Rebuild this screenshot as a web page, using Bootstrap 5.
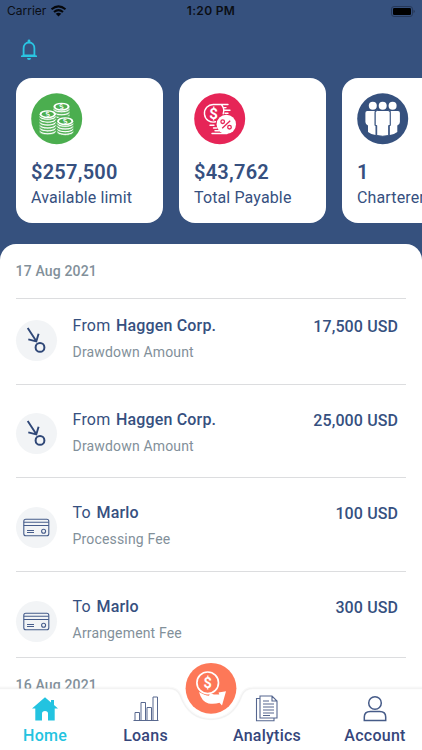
<!DOCTYPE html>
<html lang="en">
<head>
<meta charset="utf-8">
<meta name="viewport" content="width=device-width, initial-scale=1">
<title>Home</title>
<link href="https://cdn.jsdelivr.net/npm/bootstrap@5.3.0/dist/css/bootstrap.min.css" rel="stylesheet">
<style>
body{font-family:Roboto,"Liberation Sans",sans-serif;color:#36507f;background:#fff}
svg{display:block;flex:none}
.screen{width:422px;height:750px;background:#fff}
.hero{height:243.5px;background:#36517e}
.status{height:22px;font:400 12px/22px Inter,sans-serif;color:#0b0e14;padding:0 7px}
.clock{font-weight:600;letter-spacing:.35px;left:0;right:0;top:0}
.bell{margin:17px 0 0 20px}
.tiles{gap:15.5px;padding:0 0 0 15.5px;margin-top:17px}
.tile{width:147.5px;height:144.5px;border-radius:16px;flex:none;background:#fff;padding:15px 0 0 15.5px}
.figure-amt{font-size:20px;font-weight:600;line-height:24px;letter-spacing:.25px;margin-top:15px}
.figure-cap{font-size:16px;line-height:20px;letter-spacing:.13px;margin-top:4px;white-space:nowrap}
.under{background:#36517e}
.sheet{height:506.5px;border-radius:16px 16px 0 0;background:#fff;padding:0 15.6px}
.day{font-size:14px;font-weight:500;color:#82909a;letter-spacing:.15px;line-height:18px}
.day-first{height:54px;padding-top:18.5px}
.entry{height:93.7px;border-top:1.4px solid #dcdddf;padding:23px 8.3px 0 0}
.entry-first{height:86.3px;padding-top:15.5px}
.entry-last{height:86px}
.disc{width:41px;height:41px;border-radius:50%;background:#f2f4f6;margin-top:5.6px}
.who{font-size:16px;line-height:24px;letter-spacing:.17px;margin-left:16px}
.who b{font-weight:500;margin-left:1.5px}
.note{font-size:14px;line-height:20px;letter-spacing:.16px;color:#82909a;margin-top:4px}
.sum{font-size:16px;font-weight:500;line-height:24px;letter-spacing:.12px;margin-top:1px}
.day-next{border-top:1.4px solid #dcdddf;padding-top:18px}
.dock{height:82px;left:0;right:0;bottom:0}
.dock-bg{left:0;top:0}
.tabs{height:82px;padding-top:27px}
.tab{font-size:16px;font-weight:500;line-height:20px;letter-spacing:.25px;text-align:center;color:#36467b}
.tab svg{margin:0 auto 4px}
.tab.on{color:#23c3e0}
.fab{left:185px;top:-6px}
</style>
<script src="https://cdn.jsdelivr.net/npm/bootstrap@5.3.0/dist/js/bootstrap.bundle.min.js"></script>
</head>
<body>
<svg width="0" height="0" class="position-absolute">
<defs>
<g id="stack-top"><ellipse cx="0" cy="0" rx="8.1" ry="4" fill="#fff"/><ellipse cx="0" cy="0" rx="6" ry="2.6" fill="#4bae4f"/><text x="0" y="2.5" font-size="7" font-weight="700" fill="#fff" text-anchor="middle" transform="rotate(-18)">$</text></g>
<path id="layer" d="M-8.4 0c0 5 16.800 5 16.800 0v2.200c0 4.800-16.800 4.800-16.800 0z" fill="#fff"/>
<g id="draw" fill="none" stroke="#2f4777"><path d="M11.700 8 20.200 21M12.300 19.400 20.300 21.300 22.600 13.700" stroke-width="1.900"/><circle cx="24" cy="27.400" r="4.400" stroke-width="2"/></g>
<g id="fee" fill="none" stroke="#465c8b" stroke-width="1.1"><rect x="7.8" y="12.200" width="25" height="16.600" rx="2"/><path d="M7.800 15.200h25M7.800 18.500h25M11 23.500h7M11 25.500h7"/><circle cx="27.600" cy="24.200" r="2"/></g>
</defs>
</svg>
<main class="screen position-relative overflow-hidden">
<header class="hero overflow-hidden">
<div class="status d-flex align-items-center justify-content-between position-relative">
<div class="d-flex align-items-center gap-1"><span>Carrier</span>
<svg width="17" height="12" viewBox="0 0 17 12"><g fill="none" stroke="#05070b" stroke-width="2.1"><path d="M1.500 4.200q7-5.600 14 0M4 7q4.500-3.600 9 0"/></g><path d="M5.700 8.700q2.800-2 5.600 0L8.500 11.600z" fill="#05070b"/></svg></div>
<div class="clock position-absolute text-center">1:20 PM</div>
<svg width="25" height="11" viewBox="0 0 25 11"><rect x="1.500" y=".5" width="21" height="10" rx="2.6" fill="none" stroke="#263859"/><rect x="3" y="2" width="18" height="7" rx="1.2" fill="#000"/><path d="M23.700 3.800q1.800 1.700 0 3.400z" fill="#1e2c46"/></svg>
</div>
<svg class="bell" width="18" height="22" viewBox="0 0 18 22"><path d="M3.600 17V9.500C3.600 6 5.800 3.500 9 3.500s5.400 2.500 5.400 6V17" fill="none" stroke="#2ac5e2" stroke-width="1.800"/><path d="M1 16.500h16v1.600H1zM1 18.100l2-2.600h12l2 2.600zM7.600 3.700V2a1.400 1.400 0 0 1 2.800 0v1.700zM7 19h4a2 2 0 0 1-4 0z" fill="#2ac5e2"/></svg>
<div class="tiles d-flex">
<section class="tile">
<svg width="52" height="52" viewBox="0 0 52 52"><circle cx="25.700" cy="25.700" r="25.500" fill="#4bae4f"/>
<g stroke="#4bae4f" stroke-width=".7"><g transform="translate(30.500 14)"><use href="#layer" y="15"/><use href="#layer" y="12"/><use href="#layer" y="9"/><use href="#layer" y="6"/><use href="#layer" y="3"/><use href="#layer" y="0"/></g><g transform="translate(16.700 21.500)"><use href="#layer" y="14.500"/><use href="#layer" y="11.600"/><use href="#layer" y="8.700"/><use href="#layer" y="5.800"/><use href="#layer" y="2.900"/><use href="#layer" y="0"/></g><ellipse cx="34.200" cy="28.300" rx="9" ry="5" fill="#4bae4f"/><g transform="translate(34.200 28.500)"><use href="#layer" y="8.100"/><use href="#layer" y="5.400"/><use href="#layer" y="2.700"/><use href="#layer" y="0"/></g></g>
<use href="#stack-top" x="30.500" y="13.700"/><use href="#stack-top" x="16.700" y="21.200"/><use href="#stack-top" x="34.200" y="28.200"/></svg>
<div class="figure-amt">$257,500</div><div class="figure-cap">Available limit</div>
</section>
<section class="tile">
<svg width="52" height="52" viewBox="0 0 52 52"><circle cx="25.700" cy="25.700" r="25.500" fill="#e62557"/><g fill="none" stroke="#fff" stroke-width="1.400" stroke-linecap="round"><path d="M34 11.500H19.500a8.800 8.800 0 1 0 2 17.300M29 14.600h3M27.500 11.800a9 9 0 0 1 1.700 9M30 17.200h6M31 20.200h3M18 40.500H33M16 32.300h4M19.500 35h3M21 37.700h4"/></g><circle cx="32.300" cy="31.400" r="9.700" fill="#fff"/><text x="19.500" y="25.500" font-size="15" font-weight="700" fill="#fff" text-anchor="middle">$</text><g fill="none" stroke="#e62557" stroke-width="1.300"><path d="m28.200 35.200 8-7.500"/><circle cx="28.700" cy="28.700" r="1.800"/><circle cx="35.500" cy="34.200" r="1.800"/></g></svg>
<div class="figure-amt">$43,762</div><div class="figure-cap">Total Payable</div>
</section>
<section class="tile">
<svg width="52" height="52" viewBox="0 0 52 52"><circle cx="25.700" cy="25.700" r="25.500" fill="#36517e"/><g fill="#fff"><circle cx="15.800" cy="12.700" r="4"/><circle cx="25.700" cy="12.700" r="4"/><circle cx="35.600" cy="12.700" r="4"/><path d="M10.300 18h7.400v14.500h.8V42q-4.500-.5-7.500-3V32.500q-2.600-1-2.600-3.500V20q0-2 1.900-2zM41 18h-7.400v14.500h-.8V42q4.500-.5 7.500-3V32.500q2.600-1 2.600-3.500V20q0-2-1.900-2z"/><path d="M20.500 17.500h10.500q2.200 0 2.200 2.200V32.500h-1.500v10q-6 1.500-12 0v-10h-1.500V19.700q0-2.200 2.300-2.200z" stroke="#36517e"/></g></svg>
<div class="figure-amt">1</div><div class="figure-cap">Charterers</div>
</section>
</div>
</header>
<div class="under"><div class="sheet">
<div class="day day-first">17 Aug 2021</div>
<div class="entry entry-first d-flex align-items-start"><div class="disc"><svg width="41" height="41"><use href="#draw"/></svg></div><div class="who flex-grow-1">From <b>Haggen Corp.</b><div class="note">Drawdown Amount</div></div><div class="sum">17,500 USD</div></div>
<div class="entry d-flex align-items-start"><div class="disc"><svg width="41" height="41"><use href="#draw"/></svg></div><div class="who flex-grow-1">From <b>Haggen Corp.</b><div class="note">Drawdown Amount</div></div><div class="sum">25,000 USD</div></div>
<div class="entry d-flex align-items-start"><div class="disc"><svg width="41" height="41"><use href="#fee"/></svg></div><div class="who flex-grow-1">To <b>Marlo</b><div class="note">Processing Fee</div></div><div class="sum">100 USD</div></div>
<div class="entry entry-last d-flex align-items-start"><div class="disc"><svg width="41" height="41"><use href="#fee"/></svg></div><div class="who flex-grow-1">To <b>Marlo</b><div class="note">Arrangement Fee</div></div><div class="sum">300 USD</div></div>
<div class="day day-next">16 Aug 2021</div>
</div></div>
<nav class="dock position-absolute">
<svg class="dock-bg position-absolute" width="422" height="82" viewBox="0 0 422 82"><path d="M-9 20.500H169q8 0 11 7c6 17 17 24 31 24s25-7 31-24q3-7 11-7H431V92H-9z" fill="none" stroke="#000" stroke-opacity=".025" stroke-width="4"/><path d="M-9 20.500H169q8 0 11 7c6 17 17 24 31 24s25-7 31-24q3-7 11-7H431V92H-9z" fill="#fff" stroke="#000" stroke-opacity=".035" stroke-width="1.500"/><circle cx="211" cy="20.500" r="29.500" fill="#fff"/></svg>
<div class="tabs position-relative d-flex">
<div class="tab on" style="width:90px"><svg width="26" height="27" viewBox="0 -1.500 26 27"><path d="M13 .7 19 6V3.500h3V8.500L26 12h-3.300v12H16v-7q0-2.500-3-2.500T10 17v7H3.300V12H0z" fill="#23c3e0"/></svg>Home</div>
<div class="tab" style="width:111px"><svg width="26" height="27" viewBox="0 0 26 27"><path d="M.5 25.500h25M2 25.500V17.500h4.500v8M8 25.500V7.500h4.500v18M14 25.500V12.500h4.500v13M20 25.500V2h4.500v23.500" fill="none" stroke="#59698f" stroke-width="1"/></svg>Loans</div>
<div class="tab" style="width:132px"><svg width="24" height="27" viewBox="0 0 24 27"><g fill="none" stroke="#566790" stroke-width="1.100"><path d="M5 1h12l5 5v17H5zM17 1v5h5M5 3.500H1.500v22.300H19V23M8 6h6M8 9h11M8 12h11M8 15h11M8 18h11M8 20.500h7"/></g></svg>Analytics</div>
<div class="tab" style="width:84px"><svg width="24" height="27" viewBox="0 0 24 27"><g fill="none" stroke="#465b88" stroke-width="1.500"><circle cx="12" cy="8" r="6.300"/><path d="M1.300 25.500V22q0-5.500 6-5.500h9.400q6 0 6 5.500v3.500z"/></g></svg>Account</div>
</div>
<svg class="fab position-absolute" width="52" height="52" viewBox="0 0 52 52"><circle cx="26" cy="26.300" r="25.400" fill="#fd7858"/><circle cx="22.700" cy="20.800" r="10.800" fill="none" stroke="#fff" stroke-width="1.700"/><text x="22.700" y="26" font-size="14.500" font-weight="700" fill="#fff" text-anchor="middle">$</text><path d="M14 30q6 3.500 10 3.800l1-2.600 4 1.300h5.300l-.8-2L41 29.300 37 43.500l-2.500-2.700q-5 1.700-11 .7-7-2-9.500-11.500z" fill="#fff"/></svg>
</nav>
</main>
</body>
</html>
